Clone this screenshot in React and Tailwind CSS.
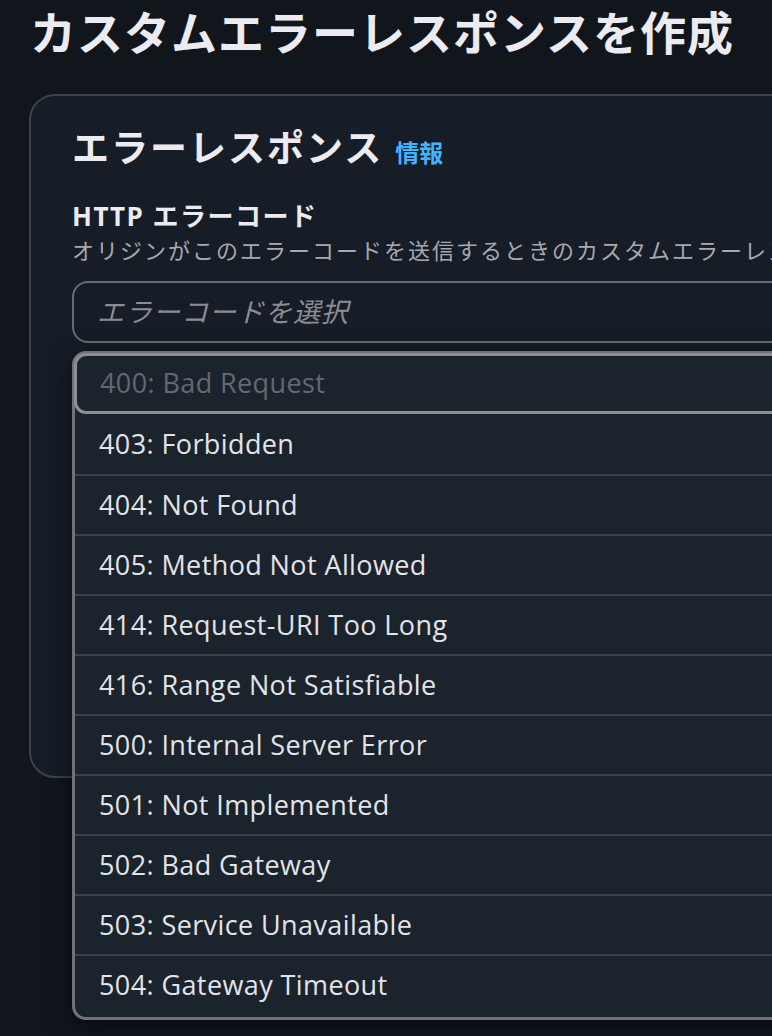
import React from "react";

const FONT = { fontFamily: '"Open Sans", "Noto Sans CJK JP", sans-serif' };

const codes = [
  "403: Forbidden",
  "404: Not Found",
  "405: Method Not Allowed",
  "414: Request-URI Too Long",
  "416: Range Not Satisfiable",
  "500: Internal Server Error",
  "501: Not Implemented",
  "502: Bad Gateway",
  "503: Service Unavailable",
  "504: Gateway Timeout",
];

export default function App() {
  return (
    <div style={FONT} className="w-[772px] h-[1036px] overflow-hidden bg-[#11161d] text-[#ebebf0]">
      {/* Page title */}
      <h1 className="pl-[30px] pt-[4px] text-[46px] leading-[56px] font-bold tracking-[1px] whitespace-nowrap">
        カスタムエラーレスポンスを作成
      </h1>

      {/* Container */}
      <div className="mt-[34px] ml-[29px] w-[800px] h-[684px] rounded-[26px] border-2 border-[#3c414a] bg-[#161d26] pl-[41px] pt-[28px]">
        <div className="flex items-baseline gap-[12px]">
          <h2 className="text-[37px] leading-[48px] font-bold tracking-[2px] whitespace-nowrap">エラーレスポンス</h2>
          <span className="text-[24px] font-bold text-[#42b4ff]">情報</span>
        </div>

        <div className="mt-[28px] text-[26px] leading-[32px] font-bold tracking-[1.5px] whitespace-nowrap">
          HTTP エラーコード
        </div>
        <div className="mt-[3px] text-[22px] leading-[30px] tracking-[2px] text-[#a8a8b0] whitespace-nowrap">
          オリジンがこのエラーコードを送信するときのカスタムエラーレスポンス
        </div>

        {/* Select with open dropdown */}
        <div className="relative mt-[16px] w-[760px]">
          <div className="h-[62px] rounded-[16px] border-2 border-[#686b73] flex items-center pl-[23px]">
            <span className="italic text-[27px] tracking-[1px] text-[#8c8c94]">エラーコードを選択</span>
          </div>

          <div className="absolute left-0 top-[70px] w-[760px] pb-[3px] rounded-[14px] border-[3px] border-[#6f727a] bg-[#1b232d] shadow-[0_6px_24px_rgba(0,0,0,0.55)]">
            <div className="h-[61px] -m-[1px] mb-0 rounded-[12px] border-[3px] border-[#8d8d95] flex items-center pl-[23px] text-[27px] tracking-[0.4px] text-[#656871]">
              400: Bad Request
            </div>
            {codes.map((c, i) => (
              <div
                key={c}
                className={
                  "h-[60px] flex items-center pl-[24px] text-[27px] tracking-[0.4px] text-[#e3e3e8] " +
                  (i > 0 ? "border-t-2 border-[#3c414b]" : "")
                }
              >
                {c}
              </div>
            ))}
          </div>
        </div>
      </div>
    </div>
  );
}
